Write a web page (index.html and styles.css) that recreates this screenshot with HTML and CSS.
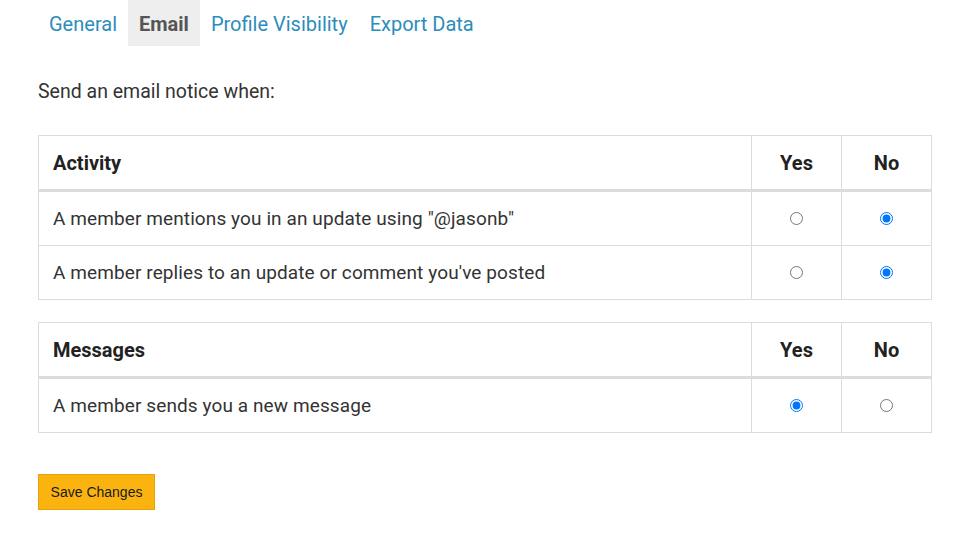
FILE: index.html
```html
<!DOCTYPE html>
<html lang="en">
<head>
<meta charset="utf-8">
<title>Email settings</title>
<link rel="stylesheet" href="styles.css">
</head>
<body>
<div class="page">
  <nav class="tabs">
    <a class="tab" href="#">General</a>
    <a class="tab active" href="#">Email</a>
    <a class="tab" href="#">Profile Visibility</a>
    <a class="tab" href="#">Export Data</a>
  </nav>

  <p class="intro">Send an email notice when:</p>

  <table class="prefs">
    <thead>
      <tr><th class="label">Activity</th><th class="opt">Yes</th><th class="opt">No</th></tr>
    </thead>
    <tbody>
      <tr>
        <td class="label">A member mentions you in an update using "@jasonb"</td>
        <td class="opt"><input type="radio" name="a1"></td>
        <td class="opt"><input type="radio" name="a1" checked></td>
      </tr>
      <tr>
        <td class="label">A member replies to an update or comment you've posted</td>
        <td class="opt"><input type="radio" name="a2"></td>
        <td class="opt"><input type="radio" name="a2" checked></td>
      </tr>
    </tbody>
  </table>

  <table class="prefs">
    <thead>
      <tr><th class="label">Messages</th><th class="opt">Yes</th><th class="opt">No</th></tr>
    </thead>
    <tbody>
      <tr>
        <td class="label">A member sends you a new message</td>
        <td class="opt"><input type="radio" name="m1" checked></td>
        <td class="opt"><input type="radio" name="m1"></td>
      </tr>
    </tbody>
  </table>

  <button class="save" type="button">Save Changes</button>
</div>
</body>
</html>
```
FILE: styles.css
```css
html, body {
  margin: 0;
  padding: 0;
  background: #fff;
}
body {
  font-family: Roboto, "Liberation Sans", sans-serif;
  color: #333;
}
.page {
  width: 894px;
  padding: 0 0 0 38px;
}
.tabs {
  display: flex;
  height: 46px;
}
.tab {
  display: block;
  padding: 0 11px;
  line-height: 48px;
  font-size: 20px;
  color: #2b8dbb;
  text-decoration: none;
}
.tab.active {
  background: #eeeeee;
  color: #555;
  font-weight: 700;
}
.intro {
  margin: 34px 0 0;
  font-size: 19.5px;
  line-height: 24px;
  color: #333;
}
.prefs {
  width: 894px;
  border-collapse: collapse;
  margin-top: 31px;
  border: 1px solid #dcdcdc;
}
.prefs + .prefs {
  margin-top: 22px;
}
.prefs th, .prefs td {
  border: 1px solid #dcdcdc;
  padding: 0 14px;
}
.prefs th {
  height: 53px;
  font-size: 20px;
  font-weight: 700;
  color: #222;
  border-bottom: 3px solid #dcdcdc;
}
.prefs td {
  height: 53px;
  font-size: 19px;
  letter-spacing: 0.1px;
  color: #333;
}
.prefs .label {
  text-align: left;
}
.prefs .opt {
  width: 61px;
  text-align: center;
}
.prefs input {
  display: block;
  margin: 0 auto;
}
.save {
  display: block;
  margin-top: 41px;
  width: 117px;
  height: 36px;
  padding: 0;
  background: #fbb40f;
  border: 1px solid #e5a40b;
  font-family: "Liberation Sans", Arial, sans-serif;
  font-size: 14px;
  color: #1a1a1a;
}
```
